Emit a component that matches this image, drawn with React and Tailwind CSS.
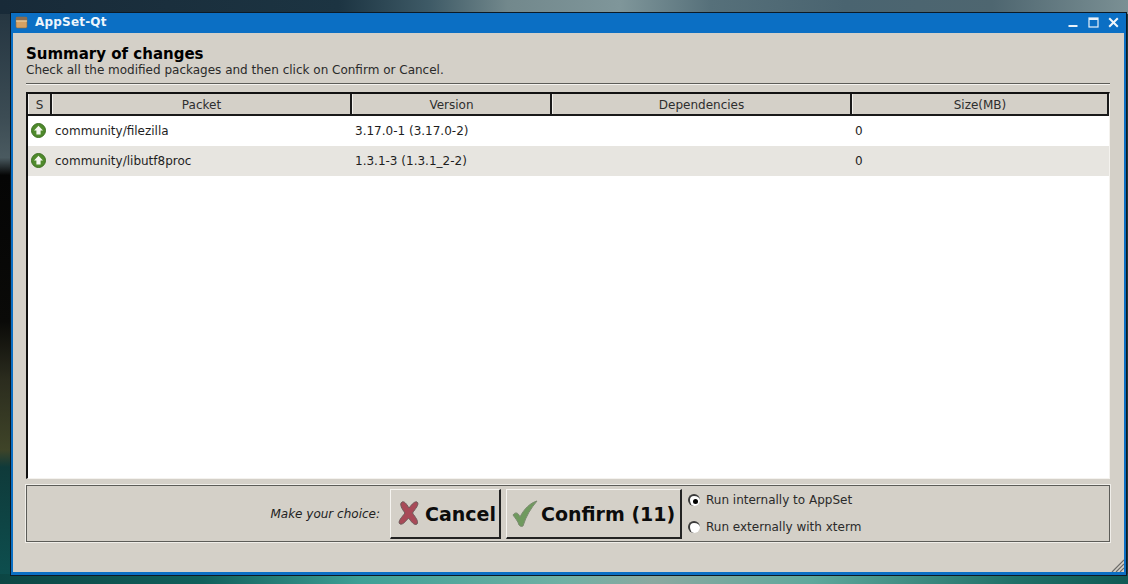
const font = { fontFamily: '"DejaVu Sans", sans-serif' };

function UpIcon() {
  return (
    <svg width="15" height="15" viewBox="0 0 15 15" className="shrink-0">
      <circle cx="7.5" cy="7.5" r="7" fill="#4f8a2c" stroke="#3c6e20" strokeWidth="1" />
      <path d="M7.5 2.8 L12 7.6 H9.6 V11.6 H5.4 V7.6 H3 Z" fill="#f4f7f0" />
    </svg>
  );
}

function HeaderCell({ className, children }) {
  return (
    <div className={"h-full flex items-center justify-center pt-[2px] border-r-2 border-[#1a1a1a] border-l border-l-[#f2f0ec] text-[12px] text-[#2e2e2e] " + className}>
      {children}
    </div>
  );
}

function Row({ bg, name, version }) {
  return (
    <div className={"h-[30px] shrink-0 flex items-center pb-[2px] text-[12px] text-[#1e1e1e] " + bg}>
      <div className="w-[24px] pl-[3px] flex items-center"><UpIcon /></div>
      <div className="w-[300px] pl-[3px] pt-[2px]">{name}</div>
      <div className="w-[500px] pl-[3px] pt-[2px]">{version}</div>
      <div className="pl-[3px] pt-[2px]">0</div>
    </div>
  );
}

function Radio({ checked, label }) {
  return (
    <div className="flex items-center gap-[6px] text-[12px] text-[#2a2a2a]">
      <span className="w-[12px] h-[12px] rounded-full bg-white border-l-2 border-t-2 border-[#3a3a3a] flex items-center justify-center">
        {checked && <span className="w-[5px] h-[5px] rounded-full bg-black" />}
      </span>
      {label}
    </div>
  );
}

export default function App() {
  return (
    <div
      style={font}
      className="w-[1128px] h-[584px] overflow-hidden pt-[12px] pl-[10px] pr-[1px] pb-[8px] [background:linear-gradient(90deg,#182a38_0%,#1c3442_30%,#3e5a66_38%,#72888c_45%,#7f969a_55%,#56707a_63%,#4a6470_75%,#4e6670_88%,#7b9094_100%)_top/100%_14px_no-repeat,linear-gradient(90deg,#0c4644_0%,#10605c_18%,#3ea096_32%,#6fb0a4_50%,#8aa8a0_58%,#5ea89c_72%,#1f7068_90%,#0f5a55_100%)_bottom/100%_10px_no-repeat,linear-gradient(180deg,#22333f_0%,#3c4c54_20%,#4a5a60_27%,#050505_30%,#0a0a08_55%,#2b2c1e_65%,#3f4428_77%,#0f3a3a_80%,#0d5050_100%)_left/10px_100%_no-repeat,#20383c]"
    >
      <div className="h-full border border-[#0c1a26] flex flex-col bg-[#0b6fc4]">
        <div className="h-[20px] shrink-0 flex items-center pl-[4px] pr-[7px] pb-[2px] text-white">
          <svg width="13" height="13" viewBox="0 0 13 13" className="shrink-0">
            <rect x="1" y="1" width="11" height="11" rx="1.5" fill="#d6a263" stroke="#8a6a3e" strokeWidth="0.6" />
            <rect x="1" y="1" width="11" height="3.5" fill="#8a6c4e" />
            <rect x="1" y="4.5" width="11" height="1" fill="#efd9ae" />
          </svg>
          <span className="ml-[7px] text-[12px] font-bold tracking-[0.2px] text-[#eef6fc]">AppSet-Qt</span>
          <div className="ml-auto flex items-center gap-[9px]">
            <svg width="11" height="11" viewBox="0 0 11 11"><rect x="0.5" y="8" width="9" height="2" fill="#e8f2fa" /></svg>
            <svg width="11" height="11" viewBox="0 0 11 11"><rect x="1" y="1" width="9" height="9" fill="none" stroke="#e8f2fa" strokeWidth="1.2" /><rect x="1" y="1" width="9" height="2" fill="#e8f2fa" /></svg>
            <svg width="11" height="11" viewBox="0 0 11 11"><path d="M1.2 1.2 L9.8 9.8 M9.8 1.2 L1.2 9.8" stroke="#f2f7fb" strokeWidth="2" /></svg>
          </div>
        </div>

        <div className="relative flex-1 mx-[2px] mb-[3px] bg-[#d4d0c8] px-[13px] pt-[13px] flex flex-col">
          <h1 className="text-[15px] leading-[17px] font-bold text-black">Summary of changes</h1>
          <p className="text-[12px] leading-[14px] text-[#2a2a2a]">Check all the modified packages and then click on Confirm or Cancel.</p>

          <div className="mt-[6px] h-[2px] mr-[1px] border-t border-[#5c5c58] border-b border-b-[#f4f2ee]" />

          <div className="mt-[7px] h-[387px] mr-[1px] border-t-2 border-l-2 border-[#111] border-r border-r-[#f4f2ee] border-b border-b-[#f4f2ee] bg-white flex flex-col">
            <div className="h-[22px] shrink-0 flex items-center bg-[#d4d0c8] border-b-2 border-[#1a1a1a]">
              <HeaderCell className="w-[24px]">S</HeaderCell>
              <HeaderCell className="w-[300px]">Packet</HeaderCell>
              <HeaderCell className="w-[200px]">Version</HeaderCell>
              <HeaderCell className="w-[300px]">Dependencies</HeaderCell>
              <HeaderCell className="flex-1">Size(MB)</HeaderCell>
            </div>
            <Row bg="bg-white" name="community/filezilla" version="3.17.0-1 (3.17.0-2)" />
            <Row bg="bg-[#e7e5e0]" name="community/libutf8proc" version="1.3.1-3 (1.3.1_2-2)" />
          </div>

          <div className="mt-[6px] h-[57px] mr-[1px] border border-[#5c5c58] outline outline-1 outline-[#f0eee9] flex items-center pl-[243px]">
            <span className="w-[120px] text-[12px] italic text-[#222] text-right pr-[10px] shrink-0">Make your choice:</span>
            <button className="h-[50px] w-[111px] shrink-0 flex items-center pl-[6px] gap-[4px] bg-[#d4d0c8] border-t border-l border-[#f6f4f0] border-r-2 border-b-2 border-r-[#222] border-b-[#222] text-[19px] font-bold text-[#0c0c0c]">
              <svg width="24" height="26" viewBox="0 0 24 26" className="shrink-0">
                <path d="M5 2 C7 1 9 3 12 8 C15 4 18 1 20 2 C23 4 18 9 15.5 13 C18 17 22 21 20 24 C17 26 14 21 11.5 18 C9 21 6 25 3 24 C0 22 5 17 8 13 C5 9 2 4 5 2 Z" fill="#a84a58" stroke="#6e5a5a" strokeWidth="1" />
              </svg>
              <span className="pt-[2px]">Cancel</span>
            </button>
            <button className="ml-[5px] h-[50px] w-[176px] shrink-0 flex items-center pl-[5px] gap-[3px] bg-[#d4d0c8] border-t border-l border-[#f6f4f0] border-r-2 border-b-2 border-r-[#222] border-b-[#222] text-[19px] font-bold text-[#0c0c0c]">
              <svg width="26" height="27" viewBox="0 0 26 27" className="shrink-0">
                <path d="M1 15 C3 12 6 12 8 17 C12 9 18 3 25 1 C19 8 14 16 11 26 C9 27 8 26 7 25 C6 21 3 18 1 15 Z" fill="#6f9a5e" stroke="#7b8a70" strokeWidth="1" />
              </svg>
              <span className="pt-[2px]">Confirm (11)</span>
            </button>
            <div className="ml-[6px] flex flex-col gap-[9px]">
              <Radio checked label="Run internally to AppSet" />
              <Radio label="Run externally with xterm" />
            </div>
          </div>

          <svg width="13" height="13" viewBox="0 0 13 13" className="absolute right-0 bottom-0">
            <path d="M1 13 L13 1 M5 13 L13 5 M9 13 L13 9" stroke="#6b6b68" strokeWidth="1.2" />
          </svg>
        </div>
      </div>
    </div>
  );
}
